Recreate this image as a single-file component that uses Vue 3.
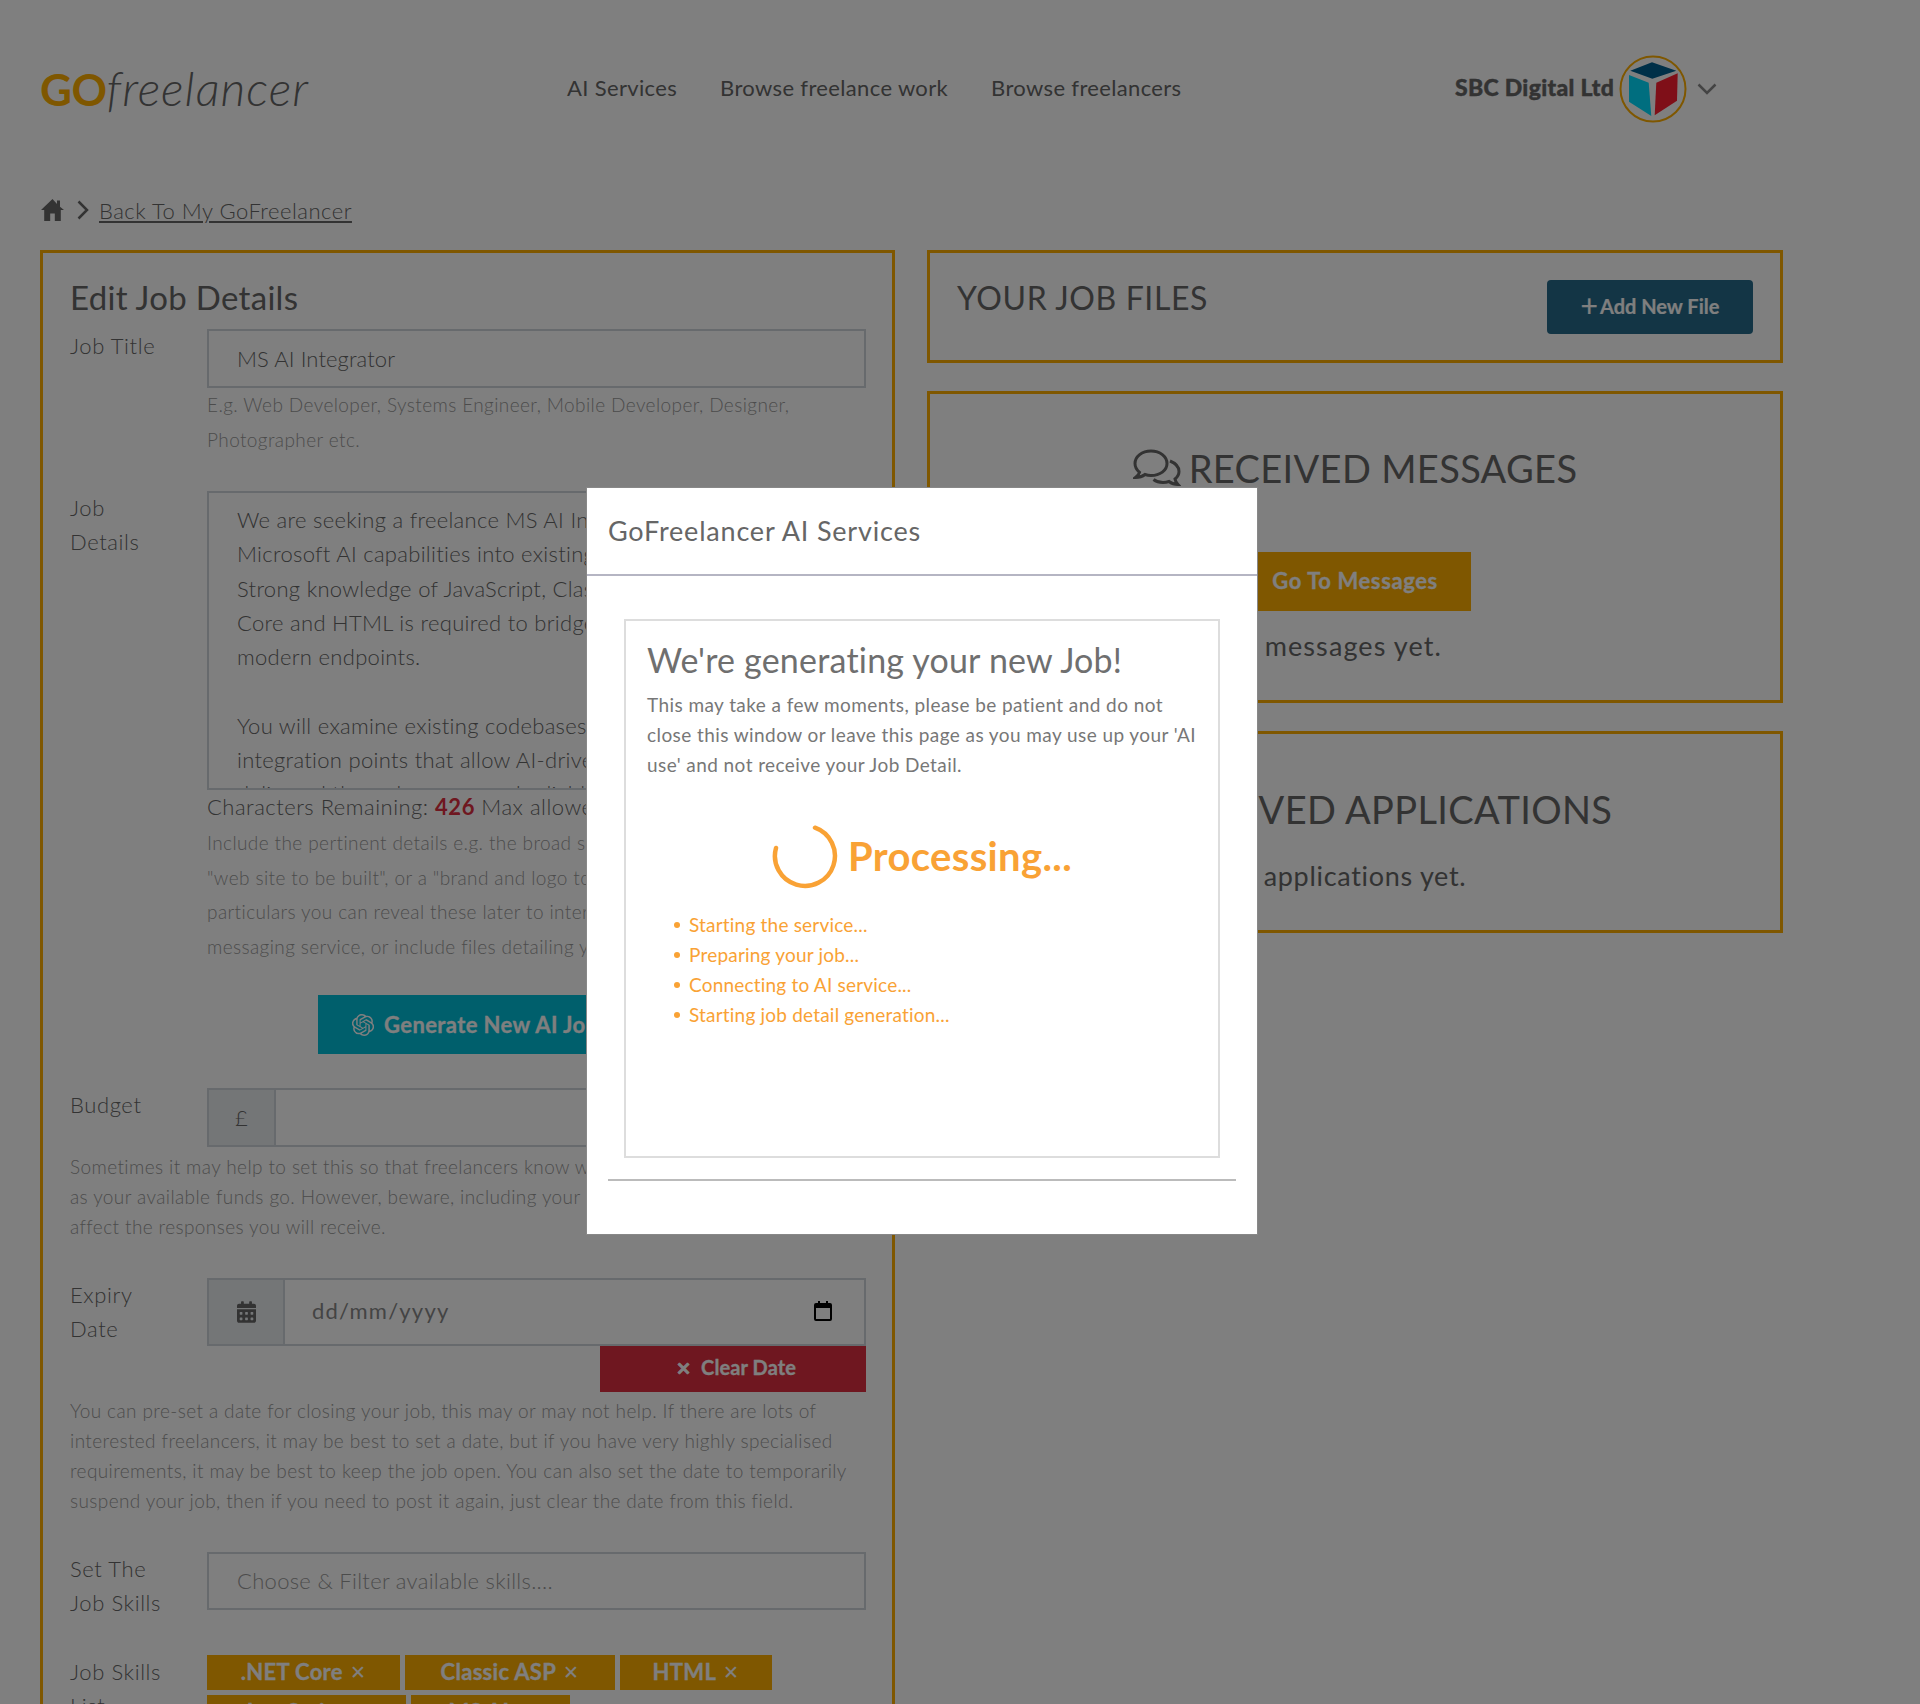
<template>
  <div class="page">
    <header class="topbar">
      <div class="logo"><b>GO</b><i>freelancer</i></div>
      <nav class="nav">
        <a v-for="item in navItems" :key="item">{{ item }}</a>
      </nav>
      <div class="account">
        <span class="company">SBC Digital Ltd</span>
        <svg class="avatar" viewBox="0 0 68 68" width="68" height="68">
          <circle cx="34" cy="34" r="32.5" fill="#fff" stroke="#ffae00" stroke-width="2" />
          <polygon points="11.3,15.7 33,7.3 57.3,15.7 33.3,23.7" fill="#006090" />
          <polygon points="10,20 29.7,27.7 32.3,61 10,46.7" fill="#00dcff" />
          <polygon points="58.7,18.3 37.3,27.7 35.7,60.3 58,45.7" fill="#ff1f30" />
        </svg>
        <svg class="caret" viewBox="0 0 20 12" width="20" height="12">
          <path d="M1.5 1.5 10 10l8.500-8.500" fill="none" stroke="#888" stroke-width="2.500" />
        </svg>
      </div>
    </header>

    <div class="crumbs">
      <svg viewBox="0 0 24 24" width="25" height="24">
        <path d="M12 1 0.5 12h3.200v11h6v-7.500h4.600V23h6V12h3.200L19.500 8.800V2.500h-3v3.400z" fill="#666" />
      </svg>
      <svg viewBox="0 0 12 20" width="12" height="20">
        <path d="M1.500 1.500 10 10l-8.500 8.500" fill="none" stroke="#666" stroke-width="2.500" />
      </svg>
      <a>Back To My GoFreelancer</a>
    </div>

    <main class="columns">
      <section class="card edit">
        <h2 class="edit-title">Edit Job Details</h2>

        <div class="row">
          <label>Job Title</label>
          <div class="field">
            <div class="control">MS AI Integrator</div>
            <p class="help tall">E.g. Web Developer, Systems Engineer, Mobile Developer, Designer,<br>Photographer etc.</p>
          </div>
        </div>

        <div class="row details">
          <label>Job<br>Details</label>
          <div class="field">
            <div class="textarea">
              <div v-for="(line, i) in detailLines" :key="i" class="tline">{{ line }}</div>
            </div>
            <div class="remaining">Characters Remaining: <b>426</b> Max allowed 1000 characters</div>
            <p class="help tall clip">Include the pertinent details e.g. the broad scope of the work, a<br>"web site to be built", or a "brand and logo to be created", any<br>particulars you can reveal these later to interested freelancers via<br>messaging service, or include files detailing your project.</p>
            <div class="gen-wrap">
              <button class="gen-btn">
                <svg viewBox="0 0 16 16" width="22" height="22" fill="currentColor">
                  <path d="M14.949 6.547a3.94 3.94 0 0 0-.348-3.273 4.11 4.11 0 0 0-4.4-1.934A4.1 4.1 0 0 0 8.423.2 4.15 4.15 0 0 0 6.305.086a4.1 4.1 0 0 0-1.891.948 4.04 4.04 0 0 0-1.158 1.753 4.1 4.1 0 0 0-1.563.679A4 4 0 0 0 .554 4.72a3.99 3.99 0 0 0 .502 4.731 3.94 3.94 0 0 0 .346 3.274 4.11 4.11 0 0 0 4.402 1.933c.382.425.852.764 1.377.995.526.231 1.095.35 1.67.346 1.78.002 3.358-1.132 3.901-2.804a4.1 4.1 0 0 0 1.563-.68 4 4 0 0 0 1.14-1.253 3.99 3.99 0 0 0-.506-4.716m-6.097 8.406a3.05 3.05 0 0 1-1.945-.694l.096-.054 3.23-1.838a.53.53 0 0 0 .265-.455v-4.49l1.366.778q.02.011.025.035v3.722c-.003 1.653-1.361 2.993-3.037 2.996m-6.53-2.75a2.95 2.95 0 0 1-.36-2.01l.095.057L5.29 12.09a.53.53 0 0 0 .527 0l3.949-2.246v1.555a.05.05 0 0 1-.022.041L6.473 13.3c-1.454.826-3.311.335-4.15-1.098m-.85-6.94A3.02 3.02 0 0 1 3.07 3.949v3.785a.51.51 0 0 0 .262.451l3.93 2.237-1.366.779a.05.05 0 0 1-.048 0L2.585 9.342a2.98 2.98 0 0 1-1.113-4.094zm11.216 2.571L8.747 5.576l1.362-.776a.05.05 0 0 1 .048 0l3.265 1.86a3 3 0 0 1 1.173 1.207 2.96 2.96 0 0 1-.27 3.2 3.05 3.05 0 0 1-1.36.997V8.279a.52.52 0 0 0-.276-.445m1.36-2.015-.097-.057-3.226-1.855a.53.53 0 0 0-.53 0L6.249 6.153V4.598a.04.04 0 0 1 .019-.04L9.533 2.7a3.07 3.07 0 0 1 3.257.139c.474.325.843.778 1.066 1.303.223.526.289 1.103.191 1.664zM5.503 8.575 4.139 7.8a.05.05 0 0 1-.026-.037V4.049c0-.57.166-1.127.476-1.607s.752-.864 1.275-1.105a3.08 3.08 0 0 1 3.234.41l-.096.054-3.23 1.838a.53.53 0 0 0-.265.455zm.742-1.577 1.758-1 1.762 1v2l-1.755 1-1.762-1z" />
                </svg>
                Generate New AI Job Details
              </button>
            </div>
          </div>
        </div>

        <div class="row budget">
          <label>Budget</label>
          <div class="field">
            <div class="group">
              <span class="addon pound">£</span>
              <div class="control"></div>
            </div>
          </div>
        </div>
        <p class="help wide first">Sometimes it may help to set this so that freelancers know what<br>as your available funds go. However, beware, including your budget<br>affect the responses you will receive.</p>

        <div class="row expiry">
          <label>Expiry<br>Date</label>
          <div class="field">
            <div class="group date">
              <span class="addon cal">
                <svg viewBox="0 0 448 512" width="19" height="22" fill="#666">
                  <path d="M0 464c0 26.500 21.500 48 48 48h352c26.500 0 48-21.500 48-48V192H0zm320-196c0-6.600 5.400-12 12-12h40c6.600 0 12 5.400 12 12v40c0 6.600-5.400 12-12 12h-40c-6.600 0-12-5.400-12-12zm0 128c0-6.600 5.400-12 12-12h40c6.600 0 12 5.400 12 12v40c0 6.600-5.400 12-12 12h-40c-6.600 0-12-5.400-12-12zM192 268c0-6.600 5.400-12 12-12h40c6.600 0 12 5.400 12 12v40c0 6.600-5.400 12-12 12h-40c-6.600 0-12-5.400-12-12zm0 128c0-6.600 5.400-12 12-12h40c6.600 0 12 5.400 12 12v40c0 6.600-5.400 12-12 12h-40c-6.600 0-12-5.400-12-12zM64 268c0-6.600 5.400-12 12-12h40c6.600 0 12 5.400 12 12v40c0 6.600-5.400 12-12 12H76c-6.600 0-12-5.400-12-12zm0 128c0-6.600 5.400-12 12-12h40c6.600 0 12 5.400 12 12v40c0 6.600-5.400 12-12 12H76c-6.600 0-12-5.400-12-12zM400 64h-48V16c0-8.800-7.200-16-16-16h-32c-8.800 0-16 7.200-16 16v48H160V16c0-8.800-7.200-16-16-16h-32c-8.800 0-16 7.200-16 16v48H48C21.500 64 0 85.500 0 112v48h448v-48c0-26.500-21.500-48-48-48z" />
                </svg>
              </span>
              <div class="control date-input">
                <span>dd/mm/yyyy</span>
                <svg viewBox="0 0 18 20" width="18" height="20">
                  <path d="M4 0h2v2h6V0h2v2h2a2 2 0 0 1 2 2v14a2 2 0 0 1-2 2H2a2 2 0 0 1-2-2V4a2 2 0 0 1 2-2h2zM2 7v11h14V7z" fill="#000" />
                </svg>
              </div>
            </div>
            <div class="clear-wrap">
              <button class="clear-btn"><span class="x">✕</span> Clear Date</button>
            </div>
          </div>
        </div>
        <p class="help wide second">You can pre-set a date for closing your job, this may or may not help. If there are lots of<br>interested freelancers, it may be best to set a date, but if you have very highly specialised<br>requirements, it may be best to keep the job open. You can also set the date to temporarily<br>suspend your job, then if you need to post it again, just clear the date from this field.</p>

        <div class="row skills">
          <label>Set The<br>Job Skills</label>
          <div class="field">
            <div class="control muted">Choose &amp; Filter available skills....</div>
          </div>
        </div>

        <div class="row tags-row">
          <label>Job Skills<br>List</label>
          <div class="field tags">
            <span v-for="tag in tags" :key="tag.name" class="tag" :style="{ width: tag.width + 'px' }">
              {{ tag.name }} <span class="tag-x">✕</span>
            </span>
          </div>
        </div>
      </section>

      <aside class="side">
        <section class="card files">
          <h2>YOUR JOB FILES</h2>
          <button class="add-btn"><span class="plus">+</span>Add New File</button>
        </section>

        <section class="card panel messages">
          <h2>
            <svg viewBox="0 0 48 40" width="48" height="40" fill="none" stroke="#666" stroke-width="3">
              <path d="M18 3C9 3 2 8.500 2 15.500c0 3.500 1.800 6.500 4.500 8.800C6 26 4.500 28 2.500 29.500c3.500 0 7-1 9.500-3 2 .7 4 1 6 1 9 0 16-5 16-12S27 3 18 3z" />
              <path d="M37 13c5 2 9 5.500 9 10.500 0 3-1.500 5.500-4 7.500.3 2 1.500 4 3 5.500-3.500 0-6.500-1-9-3-2 .7-4 1-6 1-4 0-7-1-9.500-3" />
            </svg>
            RECEIVED MESSAGES
          </h2>
          <button class="msg-btn">Go To Messages</button>
          <p class="panel-text msg-text">You haven't received any messages yet.</p>
        </section>

        <section class="card panel apps">
          <h2>
            <svg viewBox="0 0 48 40" width="48" height="40" fill="none" stroke="#666" stroke-width="3">
              <rect x="3" y="11" width="42" height="26" rx="3" />
              <path d="M16 11V5h16v6" />
            </svg>
            RECEIVED APPLICATIONS
          </h2>
          <p class="panel-text app-text">You haven't received any applications yet.</p>
        </section>
      </aside>
    </main>

    <div class="overlay"></div>
    <div class="modal">
      <div class="modal-head">GoFreelancer AI Services</div>
      <div class="modal-body">
        <div class="gen-box">
          <h3>We're generating your new Job!</h3>
          <p>This may take a few moments, please be patient and do not<br>close this window or leave this page as you may use up your 'AI<br>use' and not receive your Job Detail.</p>
          <div class="processing">
            <svg viewBox="0 0 66 66" width="66" height="66">
              <path d="M43 4.700A30 30 0 1 1 4 25" fill="none" stroke="#f9a235" stroke-width="4.500" stroke-linecap="round" />
            </svg>
            <span>Processing...</span>
          </div>
          <ul>
            <li v-for="step in steps" :key="step">{{ step }}</li>
          </ul>
        </div>
      </div>
      <div class="modal-foot"></div>
    </div>
  </div>
</template>

<script setup>
const navItems = ['AI Services', 'Browse freelance work', 'Browse freelancers']

const detailLines = [
  'We are seeking a freelance MS AI Integrator to embed',
  'Microsoft AI capabilities into existing applications.',
  'Strong knowledge of JavaScript, Classic ASP, .NET',
  'Core and HTML is required to bridge legacy code and',
  'modern endpoints.',
  '\u00a0',
  'You will examine existing codebases and identify',
  'integration points that allow AI-driven features to be',
  'delivered through secure and reliable services.',
]

const tags = [
  { name: '.NET Core', width: 193 },
  { name: 'Classic ASP', width: 210 },
  { name: 'HTML', width: 152 },
  { name: 'JavaScript', width: 199 },
  { name: 'MS AI', width: 159 },
]

const steps = [
  'Starting the service...',
  'Preparing your job...',
  'Connecting to AI service...',
  'Starting job detail generation...',
]
</script>

<style>
html, body { margin: 0; background: #fff; }
</style>

<style scoped>
* { box-sizing: border-box; }
.page {
  position: relative;
  height: 1704px;
  overflow: hidden;
  padding: 0 40px;
  background: #fff;
  color: #666;
  font-family: Lato, "Noto Sans", sans-serif;
  font-size: 22px;
}
h2, h3, p, ul { margin: 0; padding: 0; font-weight: 400; }
button { font-family: inherit; border: 0; margin: 0; cursor: pointer; }

.topbar { display: flex; align-items: center; height: 176px; }
.logo { width: 527px; font-size: 44px; line-height: 1; }
.logo b { color: #ffae00; font-weight: 700; letter-spacing: -.5px; }
.logo i { font-size: 48px; font-weight: 300; letter-spacing: 1px; }
.nav { display: flex; gap: 43px; width: 888px; margin-top: -2px; letter-spacing: .35px; }
.account { display: flex; align-items: center; }
.company { margin: -2px 5px 0 0; font-weight: 900; font-size: 23px; letter-spacing: .3px; -webkit-text-stroke: .4px #666; }
.avatar { margin-top: 2px; }
.caret { margin: 2px 0 0 10px; }

.crumbs { display: flex; align-items: center; gap: 12px; height: 34px; margin-top: 17px; }
.crumbs a { margin-left: -2px; text-decoration: underline; font-weight: 300; letter-spacing: .5px; }

.columns { display: grid; grid-template-columns: 855px 856px; column-gap: 32px; margin-top: 23px; }
.card { border: 3px solid #ffae00; }
.edit { padding: 21px 26px 0 27px; height: 1600px; }
.edit-title { font-size: 33px; line-height: 46px; margin-bottom: 9px; letter-spacing: .3px; }

.row { display: flex; }
.row label { flex: none; width: 137px; line-height: 34px; font-weight: 300; letter-spacing: .6px; }
.field { flex: 1; min-width: 0; }
.control {
  height: 59px;
  padding-left: 28px;
  line-height: 55px;
  border: 2px solid #ced4da;
  background: #fff;
  font-weight: 300;
  letter-spacing: .1px;
}
.help { color: #999; font-size: 19px; font-weight: 300; letter-spacing: .4px; white-space: nowrap; }
.help.tall { line-height: 34.500px; }
.help.wide { line-height: 30.200px; }

.details { margin-top: 34px; }
.textarea {
  height: 299px;
  padding: 10px 10px 0 28px;
  border: 2px solid #ced4da;
  overflow: hidden;
  font-weight: 300;
  letter-spacing: .3px;
}
.tline { line-height: 34.300px; white-space: nowrap; }
.remaining {
  height: 36px;
  line-height: 34px;
  font-weight: 300;
  letter-spacing: .5px;
  white-space: nowrap;
  overflow: hidden;
}
.remaining b { color: #de2e40; font-weight: 700; }
.gen-wrap { display: flex; justify-content: center; margin-top: 31px; }
.gen-btn {
  display: flex;
  align-items: center;
  gap: 10px;
  width: 437px;
  height: 59px;
  padding-left: 34px;
  background: #00bed8;
  color: #fff;
  font-size: 22px;
  font-weight: 700;
  letter-spacing: .4px;
  -webkit-text-stroke: .3px #fff;
}

.budget { margin-top: 34px; }
.group { display: flex; }
.group .control { flex: 1; border-left: 0; }
.addon {
  flex: none;
  display: flex;
  align-items: center;
  justify-content: center;
  background: #e9ecef;
  border: 2px solid #ced4da;
}
.pound { width: 69px; height: 59px; font-weight: 300; }
.first { margin-top: 5px; }

.expiry { margin-top: 35px; }
.date .control { height: 68px; }
.cal { width: 78px; height: 68px; }
.date-input {
  display: flex;
  align-items: center;
  justify-content: space-between;
  padding: 0 32px 2px 27px;
  color: #888;
  font-weight: 400;
  letter-spacing: 1.200px;
}
.clear-wrap { display: flex; justify-content: flex-end; }
.clear-btn {
  width: 266px;
  height: 46px;
  padding: 0 0 4px 6px;
  background: #de2e40;
  color: #fff;
  font-size: 20px;
  font-weight: 700;
  letter-spacing: .1px;
  -webkit-text-stroke: .3px #fff;
}
.clear-btn .x { font-size: 18px; font-weight: 700; margin-right: 5px; }
.second { margin-top: 4px; }

.skills { margin-top: 36px; }
.muted { color: #999; line-height: 54px; height: 58px; letter-spacing: .3px; }

.tags-row { margin-top: 35px; }
.tags { display: flex; flex-wrap: wrap; gap: 5px 5px; }
.tag {
  display: flex;
  align-items: center;
  justify-content: center;
  gap: 7px;
  height: 35px;
  padding-bottom: 2px;
  background: #ffae00;
  color: #fff;
  font-weight: 700;
  font-size: 22px;
  letter-spacing: .3px;
  -webkit-text-stroke: .3px #fff;
}
.tag-x { font-size: 19px; font-weight: 400; -webkit-text-stroke: 0; }

.side { display: flex; flex-direction: column; gap: 28px; }
.files {
  display: flex;
  justify-content: space-between;
  height: 113px;
  padding: 22px 27px 0 27px;
}
.files h2 { font-size: 32px; line-height: 46px; letter-spacing: .6px; }
.add-btn {
  width: 206px;
  height: 54px;
  margin-top: 5px;
  padding-bottom: 6px;
  border-radius: 4px;
  background: #266a8a;
  color: #fff;
  font-size: 20px;
  font-weight: 700;
  -webkit-text-stroke: .2px #fff;
}
.plus { font-size: 30px; font-weight: 400; line-height: 1; vertical-align: -3px; margin-right: 2px; }

.panel { display: flex; flex-direction: column; align-items: center; }
.panel h2 { display: flex; align-items: center; gap: 8px; font-size: 38px; line-height: 48px; letter-spacing: .35px; }
.messages { height: 312px; padding-top: 50px; }
.msg-btn {
  width: 232px;
  height: 59px;
  margin-top: 60px;
  padding-bottom: 4px;
  background: #ffae00;
  color: #fff;
  font-size: 22px;
  font-weight: 700;
  letter-spacing: .6px;
  -webkit-text-stroke: .3px #fff;
}
.panel-text { font-size: 27px; line-height: 36px; letter-spacing: .7px; white-space: nowrap; }
.msg-text { margin-top: 17px; align-self: flex-start; padding-left: 8px; letter-spacing: 1.100px; }
.apps { height: 202px; padding-top: 51px; }
.app-text { margin-top: 25px; align-self: flex-start; padding-left: 17px; }

.overlay { position: absolute; inset: 0; background: rgba(0, 0, 0, .5); }
.modal {
  position: absolute;
  left: 586px;
  top: 487px;
  width: 672px;
  height: 748px;
  background: #fff;
  border: 1px solid #888;
}
.modal-head {
  height: 88px;
  padding-left: 21px;
  line-height: 85px;
  border-bottom: 2px solid #b5b5c3;
  font-size: 27px;
  letter-spacing: .8px;
}
.modal-body { padding: 43px 37px 0; }
.gen-box {
  height: 539px;
  padding: 17px 21px;
  border: 2px solid #ddd;
}
.gen-box h3 { color: #6f6f6f; font-size: 34px; line-height: 44px; letter-spacing: .2px; }
.gen-box p { margin-top: 8px; color: #777; font-size: 19px; line-height: 30px; letter-spacing: .42px; }
.processing {
  display: flex;
  align-items: center;
  justify-content: center;
  gap: 10px;
  margin-top: 43px;
  color: #f9a235;
  font-size: 40px;
  font-weight: 700;
  letter-spacing: .35px;
}
.gen-box ul {
  margin-top: 21px;
  padding-left: 27px;
  list-style: none;
  color: #f9a235;
  font-size: 19px;
  letter-spacing: .2px;
}
.gen-box li { display: flex; align-items: center; gap: 9px; line-height: 30px; }
.gen-box li::before { content: ""; flex: none; width: 6px; height: 6px; border-radius: 50%; background: #f9a235; }
.modal-foot { margin: 21px 21px 0; border-top: 2px solid #bbb; }
</style>
